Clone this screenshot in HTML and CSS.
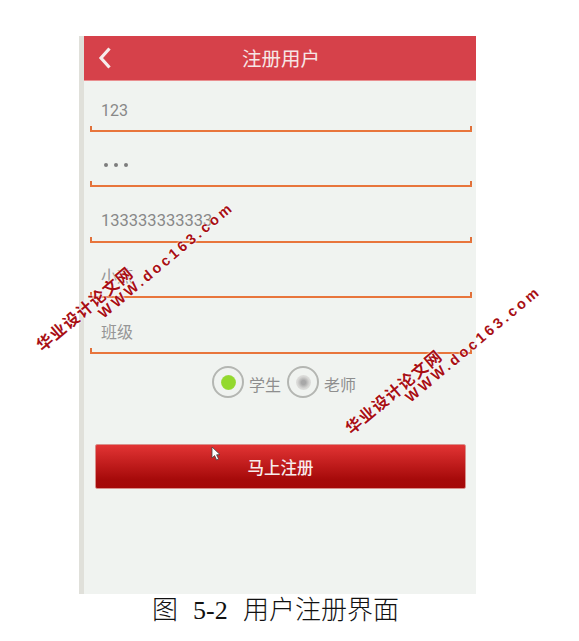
FILE: index.html
```html
<!DOCTYPE html>
<html lang="zh">
<head>
<meta charset="utf-8">
<title>注册用户</title>
<link rel="stylesheet" href="styles.css">
</head>
<body>
<main class="phone">
  <header class="bar">
    <svg class="back" width="14" height="22" viewBox="0 0 14 22"><path d="M11.5 1.5 L3 11 L11.5 20.5" fill="none" stroke="#f6ecec" stroke-width="3.2"/></svg>
    <h1 class="title">注册用户</h1>
  </header>
  <section class="form">
    <div class="field"><span>123</span></div>
    <div class="field dots"><i></i><i></i><i></i></div>
    <div class="field"><span>133333333333</span></div>
    <div class="field cjk"><span>小燕</span></div>
    <div class="field cjk"><span>班级</span></div>
    <div class="radios">
      <span class="radio on"></span><span class="label">学生</span>
      <span class="radio"></span><span class="label">老师</span>
    </div>
    <button class="submit" type="button">马上注册</button>
  </section>
  <svg class="cursor" width="11" height="16" viewBox="0 0 11 16"><path d="M1 1 L1 12 L3.6 9.6 L5.6 14 L7.6 13 L5.6 8.8 L9 8.6 Z" fill="#fff" stroke="#444" stroke-width="0.8"/></svg>
</main>
<p class="caption">图<span class="num"> 5-2 </span>用户注册界面</p>
<div class="mark m1">华业设计论文网</div>
<div class="url u1">WWW.doc163.com</div>
<div class="mark m2">华业设计论文网</div>
<div class="url u2">WWW.doc163.com</div>
</body>
</html>
```
FILE: styles.css
```css
* { box-sizing: border-box; }
html, body { margin: 0; padding: 0; }
body {
  width: 579px;
  height: 641px;
  padding: 36px 0 0 79px;
  background: #fff;
  overflow: hidden;
  position: relative;
  font-family: "Roboto", "Noto Sans CJK SC", sans-serif;
}
.phone {
  width: 397px;
  height: 558px;
  border-left: 5px solid #e0e0da;
  background: #f0f3f0;
  position: relative;
}
.bar {
  height: 45px;
  background: #d6414a;
  display: flex;
  align-items: center;
  justify-content: center;
  position: relative;
  border-bottom: 1px solid #e98f90;
}
.back { position: absolute; left: 14px; top: 11px; }
.title {
  margin: -2px 0 0 2px;
  font-size: 19.5px;
  font-weight: 400;
  color: #f6e6e6;
  font-family: "Noto Sans CJK SC", sans-serif;
}
.form { display: flex; flex-direction: column; padding: 0 4px 0 6px; }
.field {
  height: 55.5px;
  padding: 0 0 4px 11px;
  border-bottom: 2px solid #e8753c;
  position: relative;
  display: flex;
  align-items: flex-end;
  color: #888;
  font-size: 16.5px;
  line-height: 32px;
}
.field:first-child { height: 50.5px; padding-bottom: 3px; font-size: 16px; }
.field::before, .field::after {
  content: "";
  position: absolute;
  bottom: 0;
  width: 2px;
  height: 4px;
  background: #e0703a;
}
.field::before { left: 0; }
.field::after { right: 0; }
.dots { align-items: center; gap: 6px; padding: 14px 0 0 14px; }
.dots i { width: 4px; height: 4px; border-radius: 50%; background: #7c7c7c; }
.cjk { font-size: 16px; color: #969696; font-family: "Noto Sans CJK SC", sans-serif; padding-bottom: 5px; }
.radios {
  display: flex;
  align-items: center;
  height: 36px;
  margin-top: 10.5px;
  padding-left: 122px;
}
.radio {
  width: 32px;
  height: 32px;
  border: 2px solid #b4b6b2;
  border-radius: 50%;
  display: flex;
  align-items: center;
  justify-content: center;
  flex: none;
}
.radio::before {
  content: "";
  width: 15px;
  height: 15px;
  border-radius: 50%;
  background: radial-gradient(circle, #a8a8a8 0 20%, #d6d6d4 55%, #eceeea 100%);
}
.radio.on::before { background: radial-gradient(circle, #93d92e 0 60%, #c4dfa0 100%); }
.label {
  width: 43px;
  padding: 3px 0 0 5px;
  font-size: 16px;
  color: #8e8e8e;
  font-family: "Noto Sans CJK SC", sans-serif;
  white-space: nowrap;
}
.submit {
  margin: 44px 5px 0 5px;
  width: 371px;
  height: 45px;
  border: 1px solid #d9908c;
  border-radius: 2px;
  background: linear-gradient(#e23434 0%, #c01c1c 45%, #a60a0a 80%, #a50808 100%);
  color: #f7ecec;
  font-size: 16.5px;
  font-weight: 500;
  font-family: "Noto Sans CJK SC", sans-serif;
  padding: 0;
}
.cursor { position: absolute; left: 127px; top: 410px; }
.caption {
  margin: 0;
  position: absolute;
  left: 152px;
  top: 590px;
  font-size: 26px;
  line-height: 36px;
  color: #111;
  font-weight: 300;
  white-space: nowrap;
  font-family: "Noto Sans CJK SC", serif;
}
.num { font-family: "Liberation Serif", serif; word-spacing: 8.6px; }
.mark, .url {
  position: absolute;
  color: #a80f14;
  font-weight: 700;
  white-space: nowrap;
  transform: translate(-50%, -50%) rotate(-40deg);
  text-shadow: 0 0 2px #fff, 0 0 2px #fff;
}
.mark {
  font-size: 16px;
  letter-spacing: 1.2px;
  font-family: "Noto Sans CJK SC", sans-serif;
}
.url {
  font-size: 14.5px;
  letter-spacing: 3.1px;
  font-family: "Liberation Sans", sans-serif;
}
.m1 { left: 84px; top: 308px; }
.u1 { left: 166px; top: 260px; }
.m2 { left: 393px; top: 391px; }
.u2 { left: 473px; top: 344px; }
```
